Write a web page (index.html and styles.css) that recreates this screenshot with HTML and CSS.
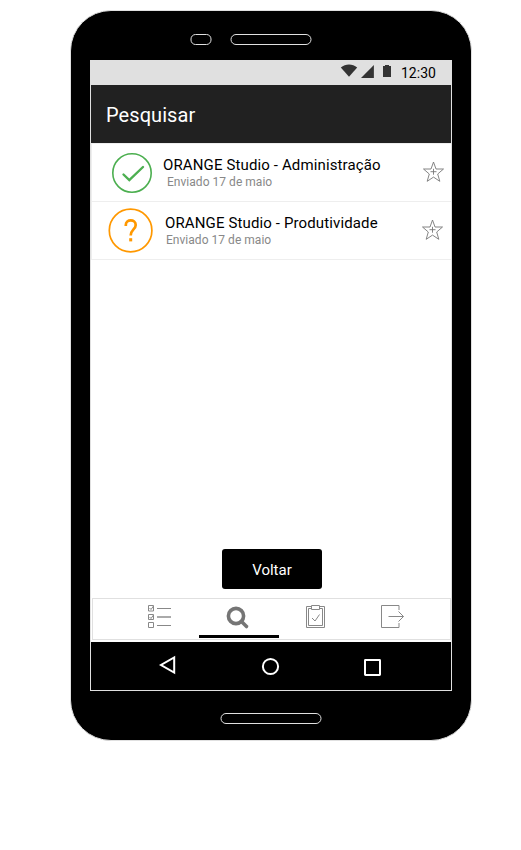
FILE: index.html
```html
<!DOCTYPE html>
<html lang="pt">
<head>
<meta charset="utf-8">
<title>Pesquisar</title>
<link rel="stylesheet" href="styles.css">
</head>
<body>
<div class="phone">
  <div class="phone-top"><span class="sensor"></span><span class="speaker"></span></div>
  <div class="screen">
    <div class="status">
      <svg class="status-icons" width="52" height="16" viewBox="0 0 52 16">
        <path d="M.8 4.400C5.500.4 12.500.4 17.200 4.400L9 13.700Z"/>
        <path d="M33.900 2v13H21Z"/>
        <path d="M43 3h2V2h4v1h2v11h-8Z"/>
      </svg>
      <span class="clock">12:30</span>
    </div>
    <header class="header"><h1>Pesquisar</h1></header>
    <main class="content">
      <div class="row">
        <svg class="state done" width="48" height="48" viewBox="0 0 48 48"><circle cx="25" cy="25" r="19.200"/><path class="tick" d="M16.500 26.500l5.800 5.500L36 19"/></svg>
        <div class="info"><p class="name">ORANGE Studio - Administração</p><p class="date">Enviado 17 de maio</p></div>
        <svg class="star" width="22" height="22" viewBox="0 0 22 22"><path d="M11.500 1L14 8h7.500l-5.800 5 2.100 7.300-6.300-4.200-6.300 4.200L7.300 13 1.500 8H9Z"/><path d="M11.500 7.800v5.900M8.500 10.700h6"/></svg>
      </div>
      <div class="row second">
        <svg class="state pending" width="48" height="48" viewBox="0 0 48 48"><circle cx="23.600" cy="24.500" r="21.300"/><path class="question" d="M18.800 20V19C18.800 12.800 28.700 12.800 28.700 19C28.700 23.500 23.700 23.500 23.700 29.500"/><path class="dot" d="M22.200 32.200h3v3.200h-3Z"/></svg>
        <div class="info"><p class="name">ORANGE Studio - Produtividade</p><p class="date">Enviado 17 de maio</p></div>
        <svg class="star" width="22" height="22" viewBox="0 0 22 22"><path d="M11.500 1L14 8h7.500l-5.800 5 2.100 7.300-6.300-4.200-6.300 4.200L7.300 13 1.500 8H9Z"/><path d="M11.500 7.800v5.900M8.500 10.700h6"/></svg>
      </div>
      <button class="back">Voltar</button>
    </main>
    <nav class="tabs">
      <a class="tab"><svg width="26" height="26" viewBox="0 0 26 26"><path d="M1.500 1.500h5v5.500h-5ZM1.500 10.500h5v5h-5ZM1.500 18.500h5v5h-5ZM2.500 4l1.500 1.500L6.500 2M2.500 13l1.500 1.500L6.500 11M10 4.500h14M10 21.500h14"/><path class="mid" d="M10 13h14"/></svg></a>
      <a class="tab active"><svg width="26" height="26" viewBox="0 0 26 26"><circle cx="12" cy="12" r="7.600"/><path d="M17.500 17.500l5 5"/></svg></a>
      <a class="tab"><svg width="26" height="26" viewBox="0 0 26 26"><path d="M8.500 2.500h-5v21h18v-21h-5M8.500 4.500h-3v17h14v-17h-3M8.500 1.500h8v4h-8ZM9 14l3 3 4.500-6.500"/></svg></a>
      <a class="tab exit"><svg width="26" height="26" viewBox="0 0 26 26"><path d="M19 6V1.500H1.500v22H19V19M8.500 12.500h15M18.500 7.500l5 5-5 5"/></svg></a>
    </nav>
    <div class="system">
      <svg width="360" height="48" viewBox="0 0 360 48"><path d="M83.200 15.500v15L70 23Z"/><circle cx="179.500" cy="24.500" r="7.600"/><rect x="274" y="18" width="15" height="15" rx=".4"/></svg>
    </div>
  </div>
  <div class="phone-bottom"><span class="mic"></span></div>
</div>
</body>
</html>
```
FILE: styles.css
```css
* { box-sizing: border-box; margin: 0; }
body { background: #fff; font-family: Roboto, sans-serif; color: #000; }
svg { display: block; fill: none; flex: none; }
.phone { width: 402px; height: 731px; margin: 10px 0 0 70px; border: 1px solid #e0e0e0; border-radius: 41px; background: #000; padding: 0 19px; }
.phone-top { height: 49px; display: flex; gap: 19px; padding: 23px 0 0 101px; }
.sensor, .speaker, .mic { height: 11px; border: 1px solid #e0e0e0; border-radius: 6px; transform: translateX(-.5px); }
.sensor { width: 21px; border-radius: 5px; }
.speaker { width: 81px; }
.screen { height: 631px; border: 1px solid #e0e0e0; border-top: 0; background: #fff; display: flex; flex-direction: column; }
.status { height: 25px; background: #e0e0e0; display: flex; align-items: flex-start; justify-content: flex-end; padding: 3px 15px 0 0; }
.status-icons { fill: #333; margin-right: 9px; }
.clock { font-size: 14px; line-height: 20px; width: 35px; white-space: nowrap; }
.header { height: 58px; background: #212121; color: #fff; padding: 15px 15px 0; }
h1 { font-size: 20px; line-height: 30px; font-weight: 400; letter-spacing: .07px; }
.content { height: 455px; display: flex; flex-direction: column; }
.row { height: 59px; border: 1px solid #eee; border-right: 0; display: flex; padding: 4px 7px 0 15px; }
.second { height: 58px; border-top: 0; padding-right: 8px; }
.info { margin-left: 8px; flex: 1; white-space: nowrap; }
.second .info { margin-left: 10px; }
.name { font-size: 15px; line-height: 20px; margin-top: 7px; letter-spacing: .13px; }
.date { font-size: 12px; line-height: 14px; color: #888; margin-left: 4px; letter-spacing: .03px; }
.second .date { margin-left: 1px; }
.star { stroke: #777; stroke-width: .9; margin-top: 13px; }
.done { stroke: #4caf50; stroke-width: 1.6; }
.tick { stroke-width: 2.4; stroke-linecap: round; }
.pending { stroke: #ff9800; stroke-width: 1.7; }
.question { stroke-width: 2.7; }
.dot { fill: #ff9800; stroke: none; }
.back { width: 100px; height: 40px; margin: auto 0 9px 131px; border: 0; border-radius: 3px; background: #000; color: #fff; font: 400 15px/40px Roboto, sans-serif; padding: 1px 0 0; text-align: center; }
.tabs { height: 42px; margin: 0 0 2px 1px; border: 1px solid #e0e0e0; display: flex; padding-left: 28px; }
.tab { width: 78px; height: 40px; display: flex; justify-content: center; padding-top: 5px; stroke: #888; }
.tab + .tab { padding-right: 4px; }
.tab.exit { padding-right: 6px; }
.tab.active { width: 80px; stroke: #757575; stroke-width: 3.6; stroke-linecap: round; border-bottom: 3px solid #000; height: 39px; }
.mid { stroke-width: 2; stroke: #aaa; }
.system { height: 48px; background: #000; stroke: #fff; stroke-width: 2; }
.phone-bottom { padding: 22px 0 0 131px; display: flex; }
.mic { width: 101px; }
```
